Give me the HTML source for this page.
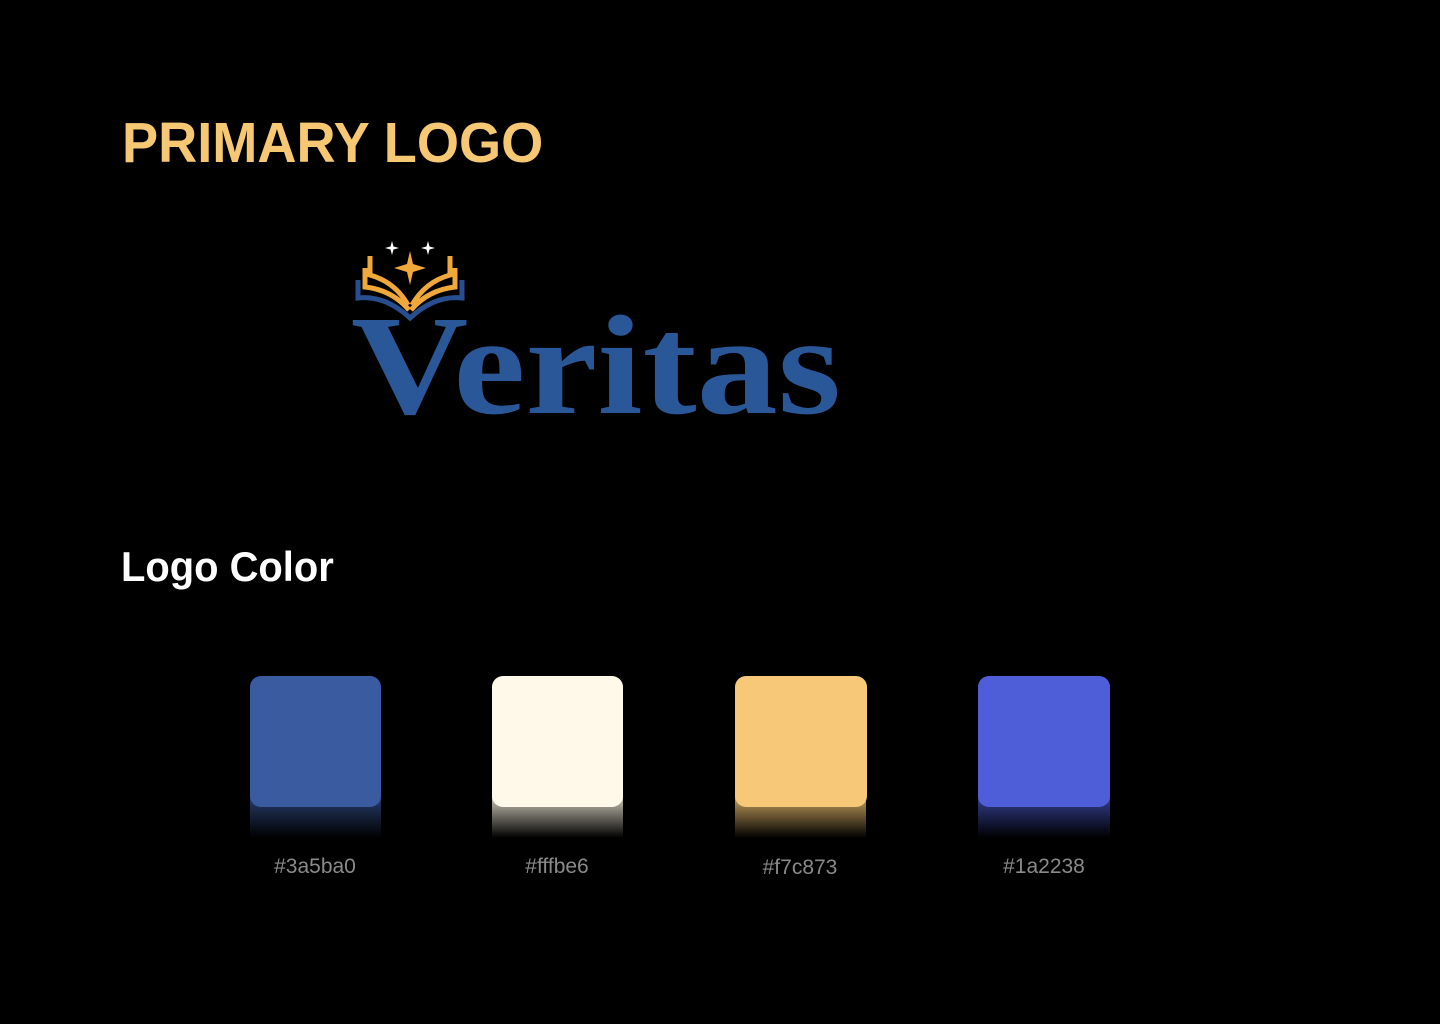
<!DOCTYPE html>
<html><head><meta charset="utf-8"><style>
html,body{margin:0;padding:0;background:#000;width:1440px;height:1024px;overflow:hidden}
body{position:relative;font-family:"Liberation Sans",sans-serif}
.t{position:absolute;white-space:nowrap;transform-origin:0 0}
.sw{position:absolute;top:676px;width:131px;height:131px;border-radius:11px}
.gl{position:absolute;top:796px;width:131px;height:42px}
.lb{position:absolute;top:855px;width:200px;text-align:center;color:#8a8a8a;font-size:21px}
</style></head><body>
<div class="t" style="left:122px;top:110px;font-size:57px;font-weight:bold;color:#f6c873;transform:scaleX(0.95)">PRIMARY LOGO</div>
<div class="t" style="left:121px;top:543px;font-size:42px;font-weight:bold;color:#fff;transform:scaleX(0.95)">Logo Color</div>

<svg style="position:absolute;left:0;top:0" width="1440" height="500">
  <g fill="#fff">
    <path d="M392 241 L393.5 246.5 L399 248 L393.5 249.5 L392 255 L390.5 249.5 L385 248 L390.5 246.5Z"/>
    <path d="M428 241 L429.5 246.5 L435 248 L429.5 249.5 L428 255 L426.5 249.5 L421 248 L426.5 246.5Z"/>
  </g>
  <path d="M410 251 L413 264 L426 268 L413 272 L410 285 L407 272 L394 268 L407 264Z" fill="#f0a83a"/>
  <g fill="none" stroke="#274f8f" stroke-width="5">
    <path d="M358 280 L358 298 Q385 295 410 318 Q435 295 462 298 L462 280"/>
  </g>
  <g fill="none" stroke="#f0a83a" stroke-width="5">
    <path d="M370 256 L370 275 Q395 282 408 305"/>
    <path d="M365 268 L365 287 Q392 290 409 310"/>
    <path d="M450 256 L450 275 Q425 282 412 305"/>
    <path d="M455 268 L455 287 Q428 290 411 310"/>
  </g>
  <text x="351" y="413" font-family="Liberation Serif,serif" font-weight="bold" font-size="142" fill="#2a5797" textLength="490" lengthAdjust="spacingAndGlyphs">Veritas</text>
</svg>

<div class="gl" style="left:250px;background:linear-gradient(#3a5ba0aa,#3a5ba000)"></div>
<div class="sw" style="left:250px;background:#3a5ba0"></div>
<div class="gl" style="left:492px;background:linear-gradient(#fffbe6cc,#fffbe600)"></div>
<div class="sw" style="left:492px;background:#fef9e8"></div>
<div class="gl" style="left:735px;background:linear-gradient(#f7c873cc,#f7c87300)"></div>
<div class="sw" style="left:735px;width:132px;background:#f6c877"></div>
<div class="gl" style="left:978px;width:132px;background:linear-gradient(#4d5ed8aa,#4d5ed800)"></div>
<div class="sw" style="left:978px;width:132px;background:#4d5ed8"></div>

<div class="lb" style="left:215px">#3a5ba0</div>
<div class="lb" style="left:457px">#fffbe6</div>
<div class="lb" style="left:700px;top:856px">#f7c873</div>
<div class="lb" style="left:944px">#1a2238</div>
</body></html>
